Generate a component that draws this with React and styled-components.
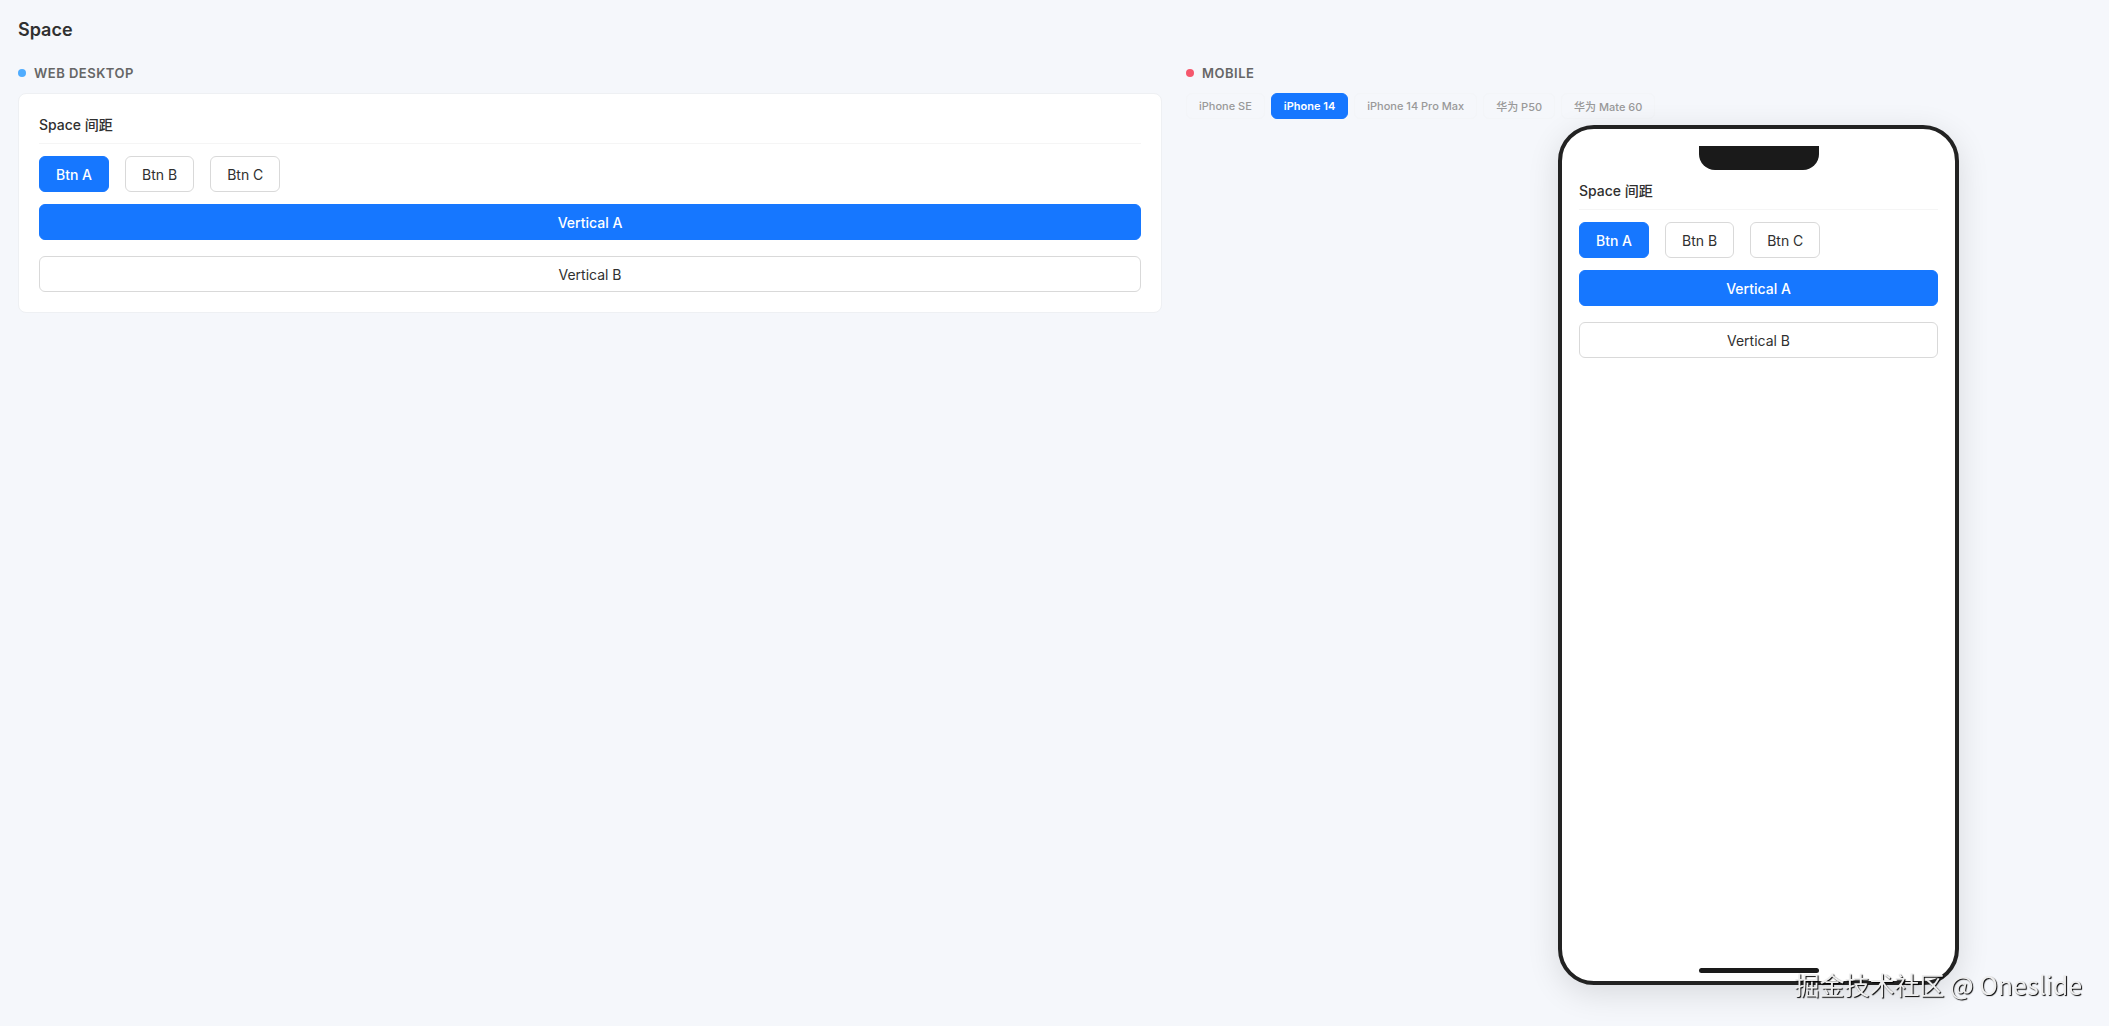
import React, { useState } from 'react';
import styled, { createGlobalStyle } from 'styled-components';

const GlobalStyle = createGlobalStyle`
  * {
    box-sizing: border-box;
  }

  body {
    margin: 0;
    background: #f5f7fb;
    color: #303030;
    font-family: Inter, 'Noto Sans CJK SC', sans-serif;
    font-size: 14px;
    line-height: 22px;
  }
`;

const Page = styled.main`
  min-height: 100vh;
  padding: 16px 18px;
`;

const PageTitle = styled.h1`
  margin: 0 0 20px;
  font-size: 18px;
  font-weight: 600;
  line-height: 28px;
`;

const Columns = styled.div`
  display: grid;
  grid-template-columns: 1144fr 905fr;
  gap: 24px;
  align-items: start;
`;

const PanelTitle = styled.h2`
  display: flex;
  align-items: center;
  gap: 8px;
  margin: 0 0 11px;
  color: #666;
  font-size: 13px;
  font-weight: 600;
  line-height: 18px;
  letter-spacing: 0.5px;
  text-transform: uppercase;
`;

const Dot = styled.span`
  width: 8px;
  height: 8px;
  border-radius: 50%;
  background: ${(props) => props.$color};
`;

const Card = styled.div`
  padding: 20px;
  background: #fff;
  border: 1px solid #eef0f3;
  border-radius: 8px;
`;

const DemoTitle = styled.h3`
  margin: 0 0 12px;
  padding-bottom: 7px;
  border-bottom: 1px solid #f5f5f5;
  font-size: 14px;
  font-weight: 500;
  line-height: 22px;
`;

const Space = styled.div`
  display: flex;
  flex-direction: ${(props) => (props.$vertical ? 'column' : 'row')};
  gap: 16px;
  margin-bottom: ${(props) => (props.$vertical ? '0' : '12px')};
`;

const Button = styled.button`
  height: 36px;
  padding: 0 16px;
  border: 1px solid ${(props) => (props.$primary ? '#1677ff' : '#d9d9d9')};
  border-radius: 6px;
  background: ${(props) => (props.$primary ? '#1677ff' : '#fff')};
  color: ${(props) => (props.$primary ? '#fff' : '#303030')};
  font-family: inherit;
  font-size: 14px;
  font-weight: ${(props) => (props.$primary ? 500 : 400)};
  cursor: pointer;
`;

const Devices = styled.div`
  display: flex;
  align-items: flex-start;
  gap: 6px;
  margin-bottom: 6px;
`;

const Device = styled.button`
  height: 26px;
  padding: 0 12px;
  border: 1px solid ${(props) => (props.$active ? '#1677ff' : '#f3f5f8')};
  border-radius: 6px;
  background: ${(props) => (props.$active ? '#1677ff' : 'transparent')};
  color: ${(props) => (props.$active ? '#fff' : '#999')};
  font-family: inherit;
  font-size: 11px;
  font-weight: ${(props) => (props.$active ? 600 : 500)};
  cursor: pointer;
`;

const PhoneArea = styled.div`
  display: flex;
  justify-content: flex-end;
  padding-right: 132px;
`;

const Phone = styled.div`
  display: flex;
  flex-direction: column;
  align-items: center;
  width: 401px;
  height: 860px;
  padding: 17px 17px 8px;
  background: #fff;
  border: 4px solid #222;
  border-radius: 36px;
  box-shadow: 0 8px 32px rgba(0, 0, 0, 0.12);
`;

const Notch = styled.div`
  width: 120px;
  height: 24px;
  border-radius: 0 0 16px 16px;
  background: #1a1a1a;
`;

const Screen = styled.div`
  flex: 1;
  width: 100%;
  padding-top: 10px;
`;

const HomeBar = styled.div`
  width: 120px;
  height: 5px;
  border-radius: 3px;
  background: #1a1a1a;
`;

const Watermark = styled.div`
  position: fixed;
  right: 27px;
  bottom: 24px;
  color: #eee;
  font-family: 'Noto Sans CJK SC', sans-serif;
  font-size: 25px;
  font-weight: 400;
  line-height: 36px;
  text-shadow: 1px 1px 1px #000;
`;

const devices = ['iPhone SE', 'iPhone 14', 'iPhone 14 Pro Max', '华为 P50', '华为 Mate 60'];

const SpaceDemo = () => {
  return (
    <>
      <DemoTitle>Space 间距</DemoTitle>
      <Space>
        <Button $primary>Btn A</Button>
        <Button>Btn B</Button>
        <Button>Btn C</Button>
      </Space>
      <Space $vertical>
        <Button $primary>Vertical A</Button>
        <Button>Vertical B</Button>
      </Space>
    </>
  );
};

const App = () => {
  const [device, setDevice] = useState('iPhone 14');

  return (
    <>
      <GlobalStyle />
      <Page>
        <PageTitle>Space</PageTitle>
        <Columns>
          <section>
            <PanelTitle>
              <Dot $color="#4facfe" />
              Web Desktop
            </PanelTitle>
            <Card>
              <SpaceDemo />
            </Card>
          </section>
          <section>
            <PanelTitle>
              <Dot $color="#f5576c" />
              Mobile
            </PanelTitle>
            <Devices>
              {devices.map((name) => (
                <Device key={name} $active={name === device} onClick={() => setDevice(name)}>
                  {name}
                </Device>
              ))}
            </Devices>
            <PhoneArea>
              <Phone>
                <Notch />
                <Screen>
                  <SpaceDemo />
                </Screen>
                <HomeBar />
              </Phone>
            </PhoneArea>
          </section>
        </Columns>
      </Page>
      <Watermark>掘金技术社区 @ Oneslide</Watermark>
    </>
  );
};

export default App;
